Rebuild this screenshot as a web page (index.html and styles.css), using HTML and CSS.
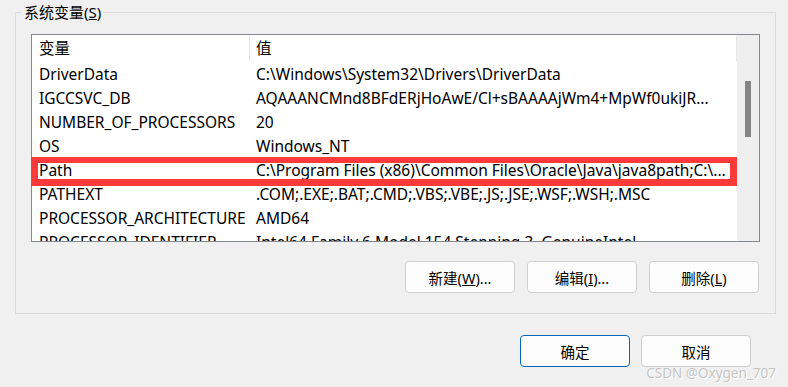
FILE: index.html
```html
<!DOCTYPE html>
<html lang="zh-CN">
<head>
  <meta charset="utf-8">
  <title>系统变量</title>
  <link rel="stylesheet" href="styles.css">
</head>
<body>
  <fieldset class="group">
    <legend class="group-title">系统变量(<u>S</u>)</legend>

    <div class="listbox">
      <div class="grid">
        <div class="row head">
          <div class="name">变量</div>
          <div class="value">值</div>
        </div>
        <div class="row">
          <div class="name">DriverData</div>
          <div class="value">C:\Windows\System32\Drivers\DriverData</div>
        </div>
        <div class="row">
          <div class="name">IGCCSVC_DB</div>
          <div class="value">AQAAANCMnd8BFdERjHoAwE/Cl+sBAAAAjWm4+MpWf0ukiJR...</div>
        </div>
        <div class="row">
          <div class="name">NUMBER_OF_PROCESSORS</div>
          <div class="value">20</div>
        </div>
        <div class="row">
          <div class="name">OS</div>
          <div class="value">Windows_NT</div>
        </div>
        <div class="row">
          <div class="name">Path</div>
          <div class="value">C:\Program Files (x86)\Common Files\Oracle\Java\java8path;C:\...</div>
        </div>
        <div class="row">
          <div class="name">PATHEXT</div>
          <div class="value">.COM;.EXE;.BAT;.CMD;.VBS;.VBE;.JS;.JSE;.WSF;.WSH;.MSC</div>
        </div>
        <div class="row">
          <div class="name">PROCESSOR_ARCHITECTURE</div>
          <div class="value">AMD64</div>
        </div>
        <div class="row">
          <div class="name">PROCESSOR_IDENTIFIER</div>
          <div class="value">Intel64 Family 6 Model 154 Stepping 3, GenuineIntel</div>
        </div>
      </div>
      <div class="scrollbar"><div class="thumb"></div></div>
      <div class="mark"></div>
    </div>

    <div class="actions">
      <button class="btn">新建(<u>W</u>)...</button>
      <button class="btn">编辑(<u>I</u>)...</button>
      <button class="btn">删除(<u>L</u>)</button>
    </div>
  </fieldset>

  <div class="footer">
    <button class="btn ok">确定</button>
    <button class="btn">取消</button>
  </div>

  <div class="watermark">CSDN @Oxygen_707</div>
</body>
</html>
```

FILE: styles.css
```css
*{
    box-sizing: border-box;
}
body{
    margin: 0;
    width: 788px;
    height: 387px;
    overflow: hidden;
    background: #f0f0f0;
    color: #000;
    font-family: "Noto Sans", "Noto Sans CJK SC", sans-serif;
    font-size: 15px;
    position: relative;
}

.group{
    margin: 2px 12px 0 15px;
    padding: 12px 15px 20px 6px;
    border: 1px solid #dcdcdc;
    min-width: 0;
}
.group-title{
    padding: 0 2px;
    line-height: 20px;
    height: 20px;
}

.listbox{
    position: relative;
    margin-left: 9px;
    height: 208px;
    border: 1px solid #828790;
    background: #fff;
    display: flex;
    font-size: 15.5px;
}
.grid{
    width: 705px;
    overflow: hidden;
}
.row{
    display: flex;
    height: 24px;
    line-height: 24px;
    white-space: nowrap;
}
.row.head{
    height: 27px;
    line-height: 26px;
}
.name{
    width: 218px;
    padding-left: 7px;
    flex: none;
}
.value{
    flex: 1;
    padding-left: 6px;
    overflow: hidden;
}
.head .name{
    width: 218px;
    border-right: 1px solid #e5e5e5;
    margin: 1px 0 1px;
    line-height: 24px;
}
.head .value{
    border-right: 1px solid #e5e5e5;
    margin: 1px 0 1px;
    padding-left: 6px;
    line-height: 24px;
}

.scrollbar{
    width: 22px;
    background: #efefef;
    flex: none;
}
.thumb{
    width: 6px;
    height: 56px;
    margin: 46px auto 0;
    background: #858585;
}

/* red annotation round the Path row */
.mark{
    position: absolute;
    left: -1px;
    top: 122px;
    width: 706px;
    height: 29px;
    border: 7px solid #fc3a3a;
    border-top-width: 6px;
}

.actions{
    display: flex;
    justify-content: flex-end;
    gap: 12px;
    margin-top: 19px;
    padding-right: 1px;
}
.btn{
    width: 110px;
    height: 32px;
    background: #fdfdfd;
    border: 1px solid #d0d0d0;
    border-radius: 4px;
    font-family: "Noto Sans", "Noto Sans CJK SC", sans-serif;
    font-size: 14.5px;
    color: #000;
    padding: 0;
}
.footer{
    display: flex;
    justify-content: flex-end;
    gap: 11px;
    margin: 21px 37px 0 0;
}
.btn.ok{
    border-color: #0067c0;
}

.watermark{
    position: absolute;
    right: 12px;
    bottom: 5px;
    font-size: 13.5px;
    color: #c4c4c4;
    text-shadow: 0 0 1px #fff, 1px 1px 0 #fff;
}
```
